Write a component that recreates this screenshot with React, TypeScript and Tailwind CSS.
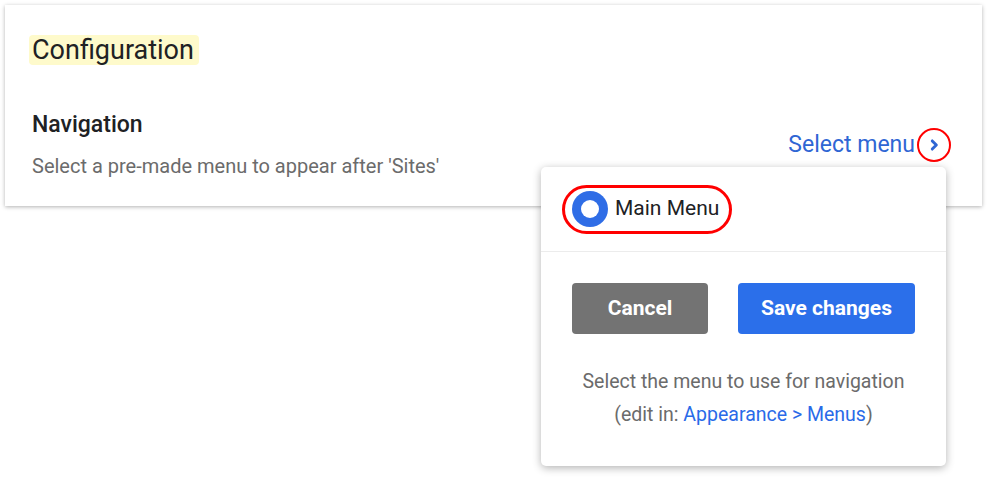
import React from "react";

export default function App() {
  return (
    <div className="relative w-full h-[477px] bg-white p-[5px]" style={{ fontFamily: "Roboto, 'Noto Sans', sans-serif" }}>
      <div className="bg-white shadow-[0_1px_4px_rgba(0,0,0,0.3)] h-[201px] pl-[24px] pr-[31px] pt-[30px] flex flex-col">
        <div className="self-start bg-[#fefacb] rounded-[4px] pl-[3px] pr-[5px] h-[30px] flex items-center text-[27px] text-[#202124]">Configuration</div>
        <div className="flex items-end justify-between mt-[46px]">
          <div className="flex flex-col pl-[3px]">
            <div className="text-[23px] font-medium text-[#202124] leading-[28px]">Navigation</div>
            <div className="text-[20px] text-[#6b6b6b] mt-[14px] leading-[26px]">Select a pre-made menu to appear after 'Sites'</div>
          </div>
          <div className="flex items-center mb-[17px]">
            <span className="text-[23px] text-[#2f66d4] mr-[2px]">Select menu</span>
            <span className="w-[34px] h-[34px] rounded-full border-[2.5px] border-[#ff0000] flex items-center justify-center">
              <svg width="14" height="14" viewBox="0 0 24 24" fill="none" stroke="#2f66d4" strokeWidth="5" strokeLinecap="round" strokeLinejoin="round">
                <path d="M9 5l7 7-7 7" />
              </svg>
            </span>
          </div>
        </div>
      </div>

      <div className="absolute left-[541px] top-[167px] w-[405px] h-[299px] bg-white rounded-[5px] shadow-[0_2px_8px_rgba(0,0,0,0.3)] flex flex-col">
        <div className="h-[85px] border-b border-[#ececec] flex items-center px-[21px]">
          <div className="flex items-center gap-[7px] h-[49px] pl-[7px] pr-[10px] rounded-full border-[3px] border-[#ff0000]">
            <span className="w-[36px] h-[36px] rounded-full bg-[#2f6de6] flex items-center justify-center">
              <span className="w-[18px] h-[18px] rounded-full bg-white" />
            </span>
            <span className="text-[21px] text-[#202124]">Main Menu</span>
          </div>
        </div>
        <div className="flex justify-center gap-[30px] mt-[31px]">
          <button className="w-[136px] h-[51px] rounded-[4px] bg-[#737373] text-white text-[21px] font-bold">Cancel</button>
          <button className="w-[177px] h-[51px] rounded-[4px] bg-[#2b6fea] text-white text-[21px] font-bold">Save changes</button>
        </div>
        <div className="mt-[31px] text-center text-[19.5px] text-[#6b6b6b] leading-[33px]">
          <div>Select the menu to use for navigation</div>
          <div>(edit in: <span className="text-[#2a6ae8]">Appearance &gt; Menus</span>)</div>
        </div>
      </div>
    </div>
  );
}
